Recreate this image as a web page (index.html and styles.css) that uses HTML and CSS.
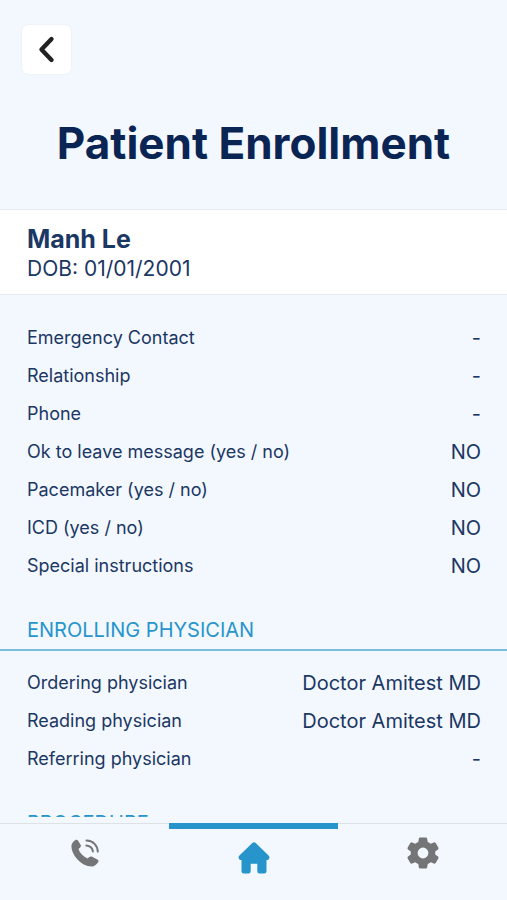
FILE: index.html
```html
<!DOCTYPE html>
<html lang="en">
<head>
<meta charset="utf-8">
<meta name="viewport" content="width=device-width, initial-scale=1">
<title>Patient Enrollment</title>
<link rel="stylesheet" href="styles.css">
</head>
<body>
<header class="header">
  <button class="back" type="button" aria-label="Back">
    <svg width="18" height="30" viewBox="0 0 18 30"><path d="M13.500 4 3.500 14.500l10 10.500" fill="none" stroke="currentColor" stroke-width="4.400" stroke-linecap="round" stroke-linejoin="round"/></svg>
  </button>
  <h1 class="title">Patient Enrollment</h1>
</header>
<section class="patient">
  <h2 class="patient-name">Manh Le</h2>
  <p class="patient-dob">DOB: 01/01/2001</p>
</section>
<main class="details">
  <dl class="fields">
    <div class="field"><dt>Emergency Contact</dt><dd>-</dd></div>
    <div class="field"><dt>Relationship</dt><dd>-</dd></div>
    <div class="field"><dt>Phone</dt><dd>-</dd></div>
    <div class="field"><dt>Ok to leave message (yes / no)</dt><dd>NO</dd></div>
    <div class="field"><dt>Pacemaker (yes / no)</dt><dd>NO</dd></div>
    <div class="field"><dt>ICD (yes / no)</dt><dd>NO</dd></div>
    <div class="field"><dt>Special instructions</dt><dd>NO</dd></div>
  </dl>
  <h2 class="section-title">ENROLLING PHYSICIAN</h2>
  <dl class="fields">
    <div class="field"><dt>Ordering physician</dt><dd>Doctor Amitest MD</dd></div>
    <div class="field"><dt>Reading physician</dt><dd>Doctor Amitest MD</dd></div>
    <div class="field"><dt>Referring physician</dt><dd>-</dd></div>
  </dl>
  <h2 class="section-title">PROCEDURE</h2>
</main>
<nav class="tabs">
  <a class="tab" href="#calls" aria-label="Calls">
    <svg width="28" height="32" viewBox="0 -2 28 32"><path d="M4.200 1.300C5.200.5 6.400.7 7.100 1.700L9.600 5.800C10.200 6.900 9.800 7.900 8.900 8.700L7.500 10C8.800 14 12.200 17.600 16.600 19.600L18.300 18.100C19.200 17.400 20.200 17.300 21.200 17.800L26.300 20.400C27.600 21.100 27.800 22.200 27.100 23.300C25.700 25.500 23.800 27.200 21.200 27.500C16 27.800 10 24.600 6 20C2.300 15.800.3 10.800.4 7C.6 4.500 2.200 2.600 4.200 1.300Z" fill="currentColor"/><path d="M15.500 1.600C22.200 1.900 26.500 6.400 26.800 12.600M15.300 6.600C19.200 7.100 21.400 9.200 21.900 12.400" fill="none" stroke="currentColor" stroke-width="2" stroke-linecap="round"/></svg>
  </a>
  <a class="tab tab-current" href="#home" aria-label="Home" aria-current="page">
    <svg width="32" height="32" viewBox="0 0 32 32"><path d="M14.300.9Q16-.5 17.700.9L30.600 13.500Q32.600 16 30 18H28.500V29Q28.500 31.500 26 31.500H21.500Q19.300 31.500 19.300 29V21.800H12.700V29Q12.700 31.500 10.500 31.500H6Q3.500 31.500 3.500 29V18H2Q-.6 16 1.400 13.500Z" fill="currentColor"/></svg>
  </a>
  <a class="tab" href="#settings" aria-label="Settings">
    <svg width="32" height="32" viewBox="0 0 32 32"><path fill-rule="evenodd" d="M13.200.5H18.800Q20 .5 20.200 1.700L20.700 5Q22.300 5.600 23.700 6.700L26.800 5.400Q28 5 28.700 6L31.300 10.500Q31.900 11.600 31 12.400L28.200 14.500Q28.400 16 28.200 17.500L31 19.600Q31.900 20.400 31.300 21.500L28.700 26Q28 27 26.800 26.600L23.700 25.300Q22.300 26.400 20.700 27L20.200 30.300Q20 31.500 18.800 31.500H13.200Q12 31.500 11.800 30.300L11.300 27Q9.700 26.400 8.300 25.300L5.200 26.600Q4 27 3.300 26L.7 21.500Q.1 20.400 1 19.600L3.800 17.500Q3.600 16 3.800 14.500L1 12.400Q.1 11.600.7 10.500L3.300 6Q4 5 5.200 5.400L8.300 6.700Q9.700 5.600 11.300 5L11.800 1.700Q12 .5 13.200.5ZM16 10.600A5.400 5.400 0 1 0 16 21.400A5.400 5.400 0 1 0 16 10.600Z" fill="currentColor"/></svg>
  </a>
</nav>
</body>
</html>
```
FILE: styles.css
```css
* { box-sizing: border-box; }

body {
  margin: 0;
  height: 100vh;
  display: flex;
  flex-direction: column;
  overflow: hidden;
  background: #f3f8fe;
  color: #1b3763;
  font-family: Inter, "Liberation Sans", sans-serif;
}

h1, h2, p, dl, dd { margin: 0; }

.header { padding: 25px 22px 38px; }

.back {
  display: flex;
  align-items: center;
  justify-content: center;
  width: 49px;
  height: 49px;
  padding: 0;
  border: 0;
  border-radius: 6px;
  background: #fff;
  color: #222;
  box-shadow: 0 0 2px #dfe5e9;
}

.title {
  margin-top: 41px;
  color: #0a2554;
  font-size: 44px;
  font-weight: 700;
  line-height: 56px;
  text-align: center;
}

.patient {
  padding: 14px 27px 10px;
  border: solid #e5eaee;
  border-width: 1px 0;
  background: #fff;
}

.patient-name {
  font-size: 25px;
  font-weight: 700;
  line-height: 30px;
}

.patient-dob {
  font-size: 21px;
  line-height: 30px;
}

.details {
  flex: 1;
  min-height: 0;
  padding-top: 24px;
  overflow-y: auto;
  scrollbar-width: none;
}

.fields { padding: 0 26px 0 27px; }

.field {
  display: flex;
  align-items: center;
  justify-content: space-between;
  height: 38px;
}

.field dt {
  font-size: 18px;
  line-height: 24px;
}

.field dd {
  font-size: 20px;
  line-height: 24px;
}

.section-title {
  margin: 32px 0 13px;
  padding: 0 27px 6px;
  border-bottom: 2px solid #79bedb;
  color: #2795cc;
  font-size: 20px;
  font-weight: 400;
  line-height: 26px;
}

.tabs {
  display: grid;
  grid-template-columns: repeat(3, 1fr);
  height: 77px;
  margin-top: 6px;
  border-top: 1px solid #dce2e6;
}

.tab {
  display: flex;
  align-items: flex-start;
  justify-content: center;
  padding-top: 13px;
  color: #737576;
}

.tab-current {
  margin-top: -1px;
  border-top: 6px solid #2795cc;
  color: #2795cc;
}
```
